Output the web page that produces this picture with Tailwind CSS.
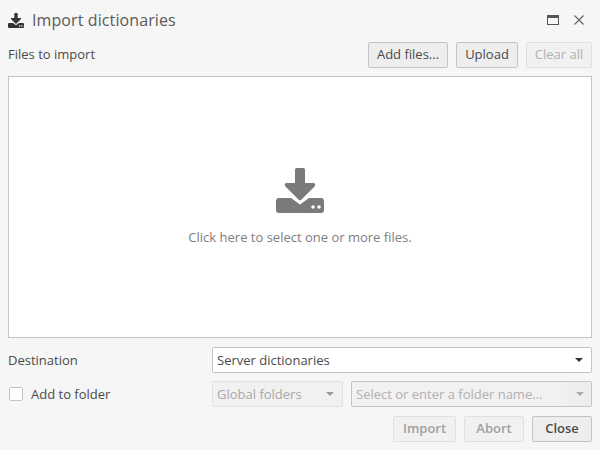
<!DOCTYPE html>
<html lang="en">
<head>
    <meta charset="UTF-8">
    <title>Import dictionaries</title>
    <script src="https://cdn.jsdelivr.net/npm/@tailwindcss/browser@4"></script>
</head>
<body class="bg-[#f6f6f6] font-['Open_Sans',sans-serif] text-[13px] text-[#4a4a4a]">
    <div class="w-[600px] h-[450px] overflow-hidden flex flex-col px-2">

        <!-- Title bar -->
        <div class="h-[40px] mb-[2px] flex items-center">
            <svg class="w-4 h-[15px] text-[#333]" viewBox="0 0 48 45" fill="currentColor"><path d="M20.500 0h7A1.500 1.500 0 0 1 29 1.500V15h8c2 0 3 1.500 1.500 3.500L25.500 31.500a2 2 0 0 1-3 0L9.500 18.500C8 16.500 9 15 11 15h8V1.500A1.500 1.500 0 0 1 20.500 0z"/><path d="M3 30h12l9 6.500L33 30h12a3 3 0 0 1 3 3v9a3 3 0 0 1-3 3H3a3 3 0 0 1-3-3V33a3 3 0 0 1 3-3z"/><circle cx="35" cy="39" r="2.500" fill="#f6f6f6"/><circle cx="42" cy="39" r="2.500" fill="#f6f6f6"/></svg>
            <span class="ml-2 text-[16px] tracking-[0.1px] text-[#5a5a5a]">Import dictionaries</span>
            <div class="ml-auto flex items-center gap-[15px] pr-2">
                <svg class="w-[12px] h-[10px]" viewBox="0 0 12 10" fill="none"><rect x="0.500" y="0.500" width="11" height="9" stroke="#555"/><rect x="0" y="0" width="12" height="3" fill="#555"/></svg>
                <svg class="w-[10px] h-[10px]" viewBox="0 0 10 10" fill="none" stroke="#666" stroke-width="1.200"><path d="M0.500 0.500l9 9M9.500 0.500l-9 9"/></svg>
            </div>
        </div>

        <!-- Files to import toolbar -->
        <div class="h-[26px] flex items-center">
            <span>Files to import</span>
            <div class="ml-auto flex gap-2">
                <button class="w-[80px] h-[26px] bg-[#eeeeee] border border-[#c4c4c4] rounded-[2px] text-[#4a4a4a]">Add files...</button>
                <button class="w-[62px] h-[26px] bg-[#eeeeee] border border-[#c4c4c4] rounded-[2px] text-[#4a4a4a]">Upload</button>
                <button class="w-[66px] h-[26px] bg-[#f1f1f1] border border-[#e0e0e0] rounded-[2px] text-[#b0b0b0]">Clear all</button>
            </div>
        </div>

        <!-- Drop area -->
        <div class="mt-2 h-[262px] bg-white border border-[#c4c4c4] flex flex-col items-center pt-[91px]">
            <svg class="w-[48px] h-[45px] text-[#7a7a7a]" viewBox="0 0 48 45" fill="currentColor"><path d="M20.500 0h7A1.500 1.500 0 0 1 29 1.500V15h8c2 0 3 1.500 1.500 3.500L25.500 31.500a2 2 0 0 1-3 0L9.500 18.500C8 16.500 9 15 11 15h8V1.500A1.500 1.500 0 0 1 20.500 0z"/><path d="M3 30h12l9 6.500L33 30h12a3 3 0 0 1 3 3v9a3 3 0 0 1-3 3H3a3 3 0 0 1-3-3V33a3 3 0 0 1 3-3z"/><circle cx="37" cy="39" r="1.800" fill="#fff"/><circle cx="43" cy="39" r="1.800" fill="#fff"/></svg>
            <p class="mt-[15px] text-[#7d7d7d]">Click here to select one or more files.</p>
        </div>

        <!-- Destination -->
        <div class="mt-[9px] h-[26px] flex items-center">
            <span class="w-[204px] pt-px">Destination</span>
            <div class="flex-1 h-[26px] bg-white border border-[#c4c4c4] rounded-[2px] flex items-center pl-[4px] pr-[8px] text-[#4a4a4a]">
                <span class="pt-px">Server dictionaries</span>
                <span class="ml-auto w-0 h-0 border-x-[4px] border-x-transparent border-t-[4px] border-t-[#333]"></span>
            </div>
        </div>

        <!-- Add to folder -->
        <div class="mt-2 h-[26px] flex items-center">
            <div class="w-[204px] flex items-center">
                <span class="ml-[1px] w-[14px] h-[14px] bg-white border border-[#c4c4c4] rounded-[2px]"></span>
                <span class="ml-[8px] pt-px">Add to folder</span>
            </div>
            <div class="w-[131px] h-[26px] bg-[#f1f1f1] border border-[#e0e0e0] rounded-[2px] flex items-center pl-[4px] pr-[8px] text-[#a8a8a8]">
                <span class="pt-px">Global folders</span>
                <span class="ml-auto w-0 h-0 border-x-[4px] border-x-transparent border-t-[4px] border-t-[#999]"></span>
            </div>
            <div class="ml-2 flex-1 h-[26px] bg-[#f1f1f1] border border-[#c4c4c4] rounded-[2px] flex items-center text-[#b0b0b0]">
                <span class="pl-[4px] pt-px">Select or enter a folder name...</span>
                <span class="ml-auto w-[24px] h-full bg-[#eeeeee] flex items-center justify-center pl-[2px]">
                    <span class="w-0 h-0 border-x-[4px] border-x-transparent border-t-[4px] border-t-[#aaa]"></span>
                </span>
            </div>
        </div>

        <!-- Footer buttons -->
        <div class="mt-[9px] flex justify-end gap-2">
            <button class="w-[63px] h-[26px] bg-[#f1f1f1] border border-[#e0e0e0] rounded-[2px] text-[#a0a0a0] font-semibold">Import</button>
            <button class="w-[60px] h-[26px] bg-[#f1f1f1] border border-[#e0e0e0] rounded-[2px] text-[#a0a0a0] font-semibold">Abort</button>
            <button class="w-[60px] h-[26px] bg-[#eeeeee] border border-[#c4c4c4] rounded-[2px] text-[#4a4a4a] font-semibold">Close</button>
        </div>
    </div>
</body>
</html>
